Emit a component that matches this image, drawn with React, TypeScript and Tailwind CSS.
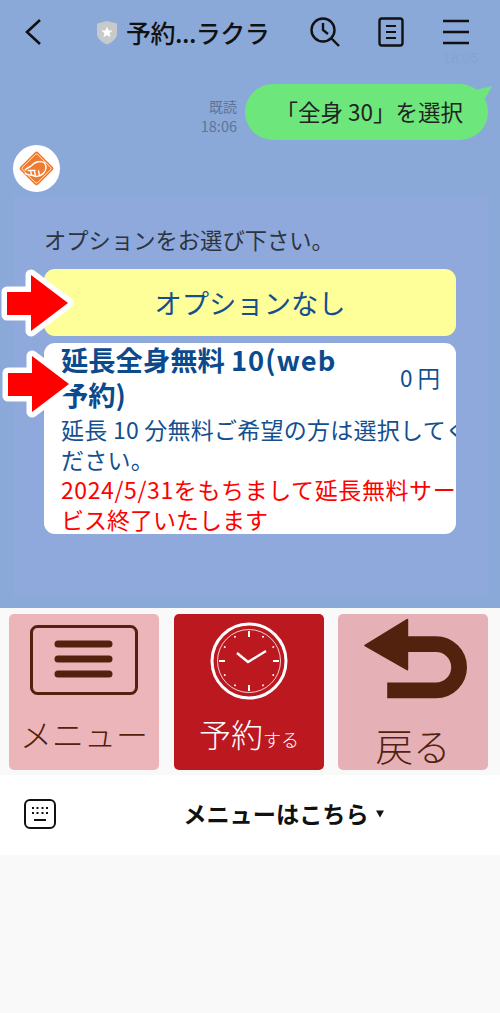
import React from "react";

const jp = "font-['Noto_Sans_CJK_JP','Noto_Sans',sans-serif]";

const RedArrow = ({ className }: { className: string }) => (
  <svg viewBox="0 0 72 68" className={`overflow-visible ${className}`}>
    <path
      d="M5 23H29V6L66 34L29 62V46H5Z"
      fill="#ff0000"
      stroke="#ffffff"
      strokeWidth="11"
      strokeLinejoin="round"
      paintOrder="stroke"
    />
  </svg>
);

const Header = () => (
  <div className="flex h-[66px] items-center pl-6 pr-[31px] pb-[2px]">
    <svg viewBox="0 0 18 28" className="h-[28px] w-[18px] shrink-0">
      <path d="M16 2L3 14L16 26" fill="none" stroke="#111" strokeWidth="2.6" />
    </svg>
    <div className="ml-[54px] flex w-[221px] items-center gap-[8px]">
      <svg viewBox="0 0 22 25" className="h-[25px] w-[22px] shrink-0">
        <path d="M1 3.5L11 1L21 3.5V14C21 19 15 23 11 24.5C7 23 1 19 1 14Z" fill="#c8c9ca" />
        <path
          d="M11 6.5L12.6 10.4L16.6 10.6L13.5 13.2L14.5 17.2L11 15L7.5 17.2L8.5 13.2L5.4 10.6L9.4 10.4Z"
          fill="#fff"
        />
      </svg>
      <span className="text-[25px] leading-none font-medium tracking-[-0.5px] whitespace-nowrap text-[#111]">予約...ラクラ</span>
    </div>
    <svg viewBox="0 0 30 30" className="ml-[-4px] h-[30px] w-[30px] shrink-0">
      <circle cx="13" cy="13" r="11.5" fill="none" stroke="#111" strokeWidth="2.4" />
      <path d="M13 6V13L18 17" fill="none" stroke="#111" strokeWidth="2.4" />
      <path d="M21 21L29 29" stroke="#111" strokeWidth="2.4" />
    </svg>
    <svg viewBox="0 0 26 30" className="ml-[38px] h-[30px] w-[26px] shrink-0">
      <rect x="1.5" y="1.5" width="23" height="27" rx="2.5" fill="none" stroke="#111" strokeWidth="2.4" />
      <path d="M8 9H18M8 15H18M8 21H18" stroke="#111" strokeWidth="2.2" />
    </svg>
    <svg viewBox="0 0 26 26" className="ml-[39px] h-[26px] w-[26px] shrink-0">
      <path d="M0 2H26M0 13H26M0 24H26" stroke="#111" strokeWidth="2.4" />
    </svg>
  </div>
);

const Avatar = () => (
  <div className="ml-[13px] flex h-[47px] w-[47px] items-center justify-center rounded-full bg-white">
    <svg viewBox="0 0 40 40" className="h-[39px] w-[39px]">
      <rect x="7" y="7" width="26" height="26" rx="3" transform="rotate(45 20 20)" fill="#ee7d33" />
      <rect x="9" y="9" width="22" height="22" rx="2" transform="rotate(45 20 20)" fill="none" stroke="#fff" strokeWidth="0.8" />
      <path
        d="M8 22C10 19 14 19 16 16C19 13 24 12 28 14C31 17 30 22 27 25C24 28 20 29 16 27C13 27 10 26 8 25"
        fill="none"
        stroke="#fff"
        strokeWidth="1.5"
      />
      <path d="M14 23L15 27M18 23L19 28M22 22L23 27M11 22H19" stroke="#fff" strokeWidth="1.4" />
    </svg>
  </div>
);

const OptionCard = () => (
  <div className="ml-[13px] h-[398px] w-[475px] bg-[#8fa9dc] pt-[30px] pl-[31px]">
    <p className="text-[22.3px] leading-[24px] whitespace-nowrap text-[#2c3440]">オプションをお選び下さい。</p>
    <div className="relative mt-[18px] flex h-[67px] w-[412px] items-center justify-center rounded-[11px] bg-[#ffff99] pb-[1px] text-[27.3px] text-[#144f8f]">
      オプションなし
      <RedArrow className="absolute top-[0px] left-[-42px] h-[68px] w-[72px]" />
    </div>
    <div className="relative mt-[7px] h-[191px] w-[412px]">
      <div className="h-full overflow-hidden rounded-[11px] bg-white pl-[17px]">
        <div className="mt-[-1px] flex items-center">
          <p className="w-[292px] text-[27.3px] leading-[35px] font-bold text-[#0b4a8c]">
            延長全身無料 <span className="tracking-[1px]">10(web</span>
            <br />
            予約)
          </p>
          <p className="pl-[47px] text-[22.5px] leading-none text-[#144f8f]">0 円</p>
        </div>
        <p className="mt-[2px] text-[23px] leading-[30px] tracking-[0.25px] whitespace-nowrap text-[#144f8f]">
          延長 10 分無料ご希望の方は選択してく
          <br />
          ださい。
        </p>
        <p className="text-[23px] leading-[30px] whitespace-nowrap text-[#ff0000]">
          <span className="tracking-[0.6px]">2024/5/31をもちまして延長無料サー</span>
          <br />
          ビス終了いたします
        </p>
      </div>
      <RedArrow className="absolute top-[7px] left-[-41px] h-[68px] w-[72px]" />
    </div>
  </div>
);

const MenuTile = ({
  bg,
  className,
  children,
}: {
  bg: string;
  className?: string;
  children: React.ReactNode;
}) => (
  <div className={`flex h-[156px] w-[150px] flex-col items-center rounded-[5px] ${bg} ${className ?? ""}`}>{children}</div>
);

const ClockIcon = () => {
  const ticks = Array.from({ length: 12 }, (_, i) => i * 30);
  return (
    <svg viewBox="0 0 78 78" className="mt-[8px] h-[78px] w-[78px]">
      <circle cx="39" cy="39" r="37" fill="none" stroke="#fff" strokeWidth="3" />
      <circle cx="39" cy="39" r="31.5" fill="none" stroke="#fff" strokeWidth="0.8" />
      {ticks.map((a) =>
        a % 90 === 0 ? (
          <rect key={a} x="38" y="9" width="2" height="6" fill="#fff" transform={`rotate(${a} 39 39)`} />
        ) : (
          <circle key={a} cx="39" cy="11" r="1" fill="#fff" transform={`rotate(${a} 39 39)`} />
        )
      )}
      <path d="M27 31L38 40L56 29" fill="none" stroke="#fff" strokeWidth="2.4" />
    </svg>
  );
};

const RichMenu = () => (
  <div className="flex h-[167px] gap-[15px] bg-[#f9f9f9] pt-[6px] pl-[9px]">
    <MenuTile bg="bg-[#ecb5ba]">
      <svg viewBox="0 0 108 70" className="mt-[11px] h-[70px] w-[108px]">
        <rect x="1.5" y="1.5" width="105" height="67" rx="6" fill="none" stroke="#52220f" strokeWidth="3" />
        <path d="M28 19H79M28 34H79M28 49H79" stroke="#52220f" strokeWidth="7" strokeLinecap="round" />
      </svg>
      <span className="mt-[16px] text-[32px] leading-[44px] font-light whitespace-nowrap text-[#52220f]">メニュー</span>
    </MenuTile>
    <MenuTile bg="bg-[#bc1820]" className="mr-[-1px]">
      <ClockIcon />
      <span className="mt-[11px] text-[32px] leading-[44px] font-light whitespace-nowrap text-white">
        予約<span className="text-[18px]">する</span>
      </span>
    </MenuTile>
    <MenuTile bg="bg-[#e6b1b6]">
      <svg viewBox="0 0 150 90" className="h-[90px] w-[150px]">
        <path d="M25 33L69 6V58Z" fill="#52220f" stroke="#52220f" strokeWidth="2" strokeLinejoin="round" />
        <path d="M60 31.5H99A24.25 24.25 0 0 1 99 80H48" fill="none" stroke="#52220f" strokeWidth="16.5" />
      </svg>
      <span className="mt-[20px] text-[37.5px] leading-[50px] font-light whitespace-nowrap text-[#52220f]">戻る</span>
    </MenuTile>
  </div>
);

const BottomBar = () => (
  <div className="relative flex h-[80px] items-center justify-center bg-white pl-[68px]">
    <svg viewBox="0 0 32 30" className="absolute top-[24px] left-[24px] h-[30px] w-[32px]">
      <rect x="1" y="1" width="30" height="28" rx="5" fill="none" stroke="#111" strokeWidth="2" />
      <path
        d="M8 9H10M12.5 9H14.5M17.5 9H19.5M22 9H24M8 14H10M12.5 14H14.5M17.5 14H19.5M22 14H24M10 21H22"
        stroke="#111"
        strokeWidth="2"
      />
    </svg>
    <div className="flex items-center pb-[2px]">
      <span className="text-[23.2px] leading-none font-bold text-[#111]">メニューはこちら</span>
      <svg viewBox="0 0 10 8" className="ml-[6px] h-[8px] w-[10px]">
        <path d="M1 0.5H9L5 7.5Z" fill="#111" />
      </svg>
    </div>
  </div>
);

export default function App() {
  return (
    <div className={`${jp} flex h-[1013px] w-[500px] flex-col overflow-hidden bg-[#f9f9f9]`}>
      <div className="relative h-[608px] overflow-hidden bg-[#8aa9d8]">
        <Header />
        <div className="mt-[-14px] flex h-[32px] justify-end pr-[22px] font-['Liberation_Sans',sans-serif] text-[14px] leading-[12px] text-[#86a3d0]">
          18:06
        </div>
        <div className="flex h-[56px] items-end justify-end pr-[12px]">
          <div className="mr-[8px] mb-[5px] text-right leading-[19px] text-[#5f7396]">
            <p className="text-[14px]">既読</p>
            <p className="text-[14.5px]">18:06</p>
          </div>
          <div className="relative flex h-[56px] w-[243px] items-center justify-end rounded-[28px] bg-[#6de67c] pr-[25px] text-[22.5px] whitespace-nowrap text-[#222]">
            「全身 30」を選択
            <svg viewBox="0 0 16 14" className="absolute top-[1px] right-[-4px] h-[14px] w-[16px]">
              <path d="M0 5L16 1L9 14Z" fill="#6de67c" />
            </svg>
          </div>
        </div>
        <div className="mt-[5px]">
          <Avatar />
        </div>
        <div className="mt-[5px]">
          <OptionCard />
        </div>
      </div>
      <RichMenu />
      <BottomBar />
    </div>
  );
}
